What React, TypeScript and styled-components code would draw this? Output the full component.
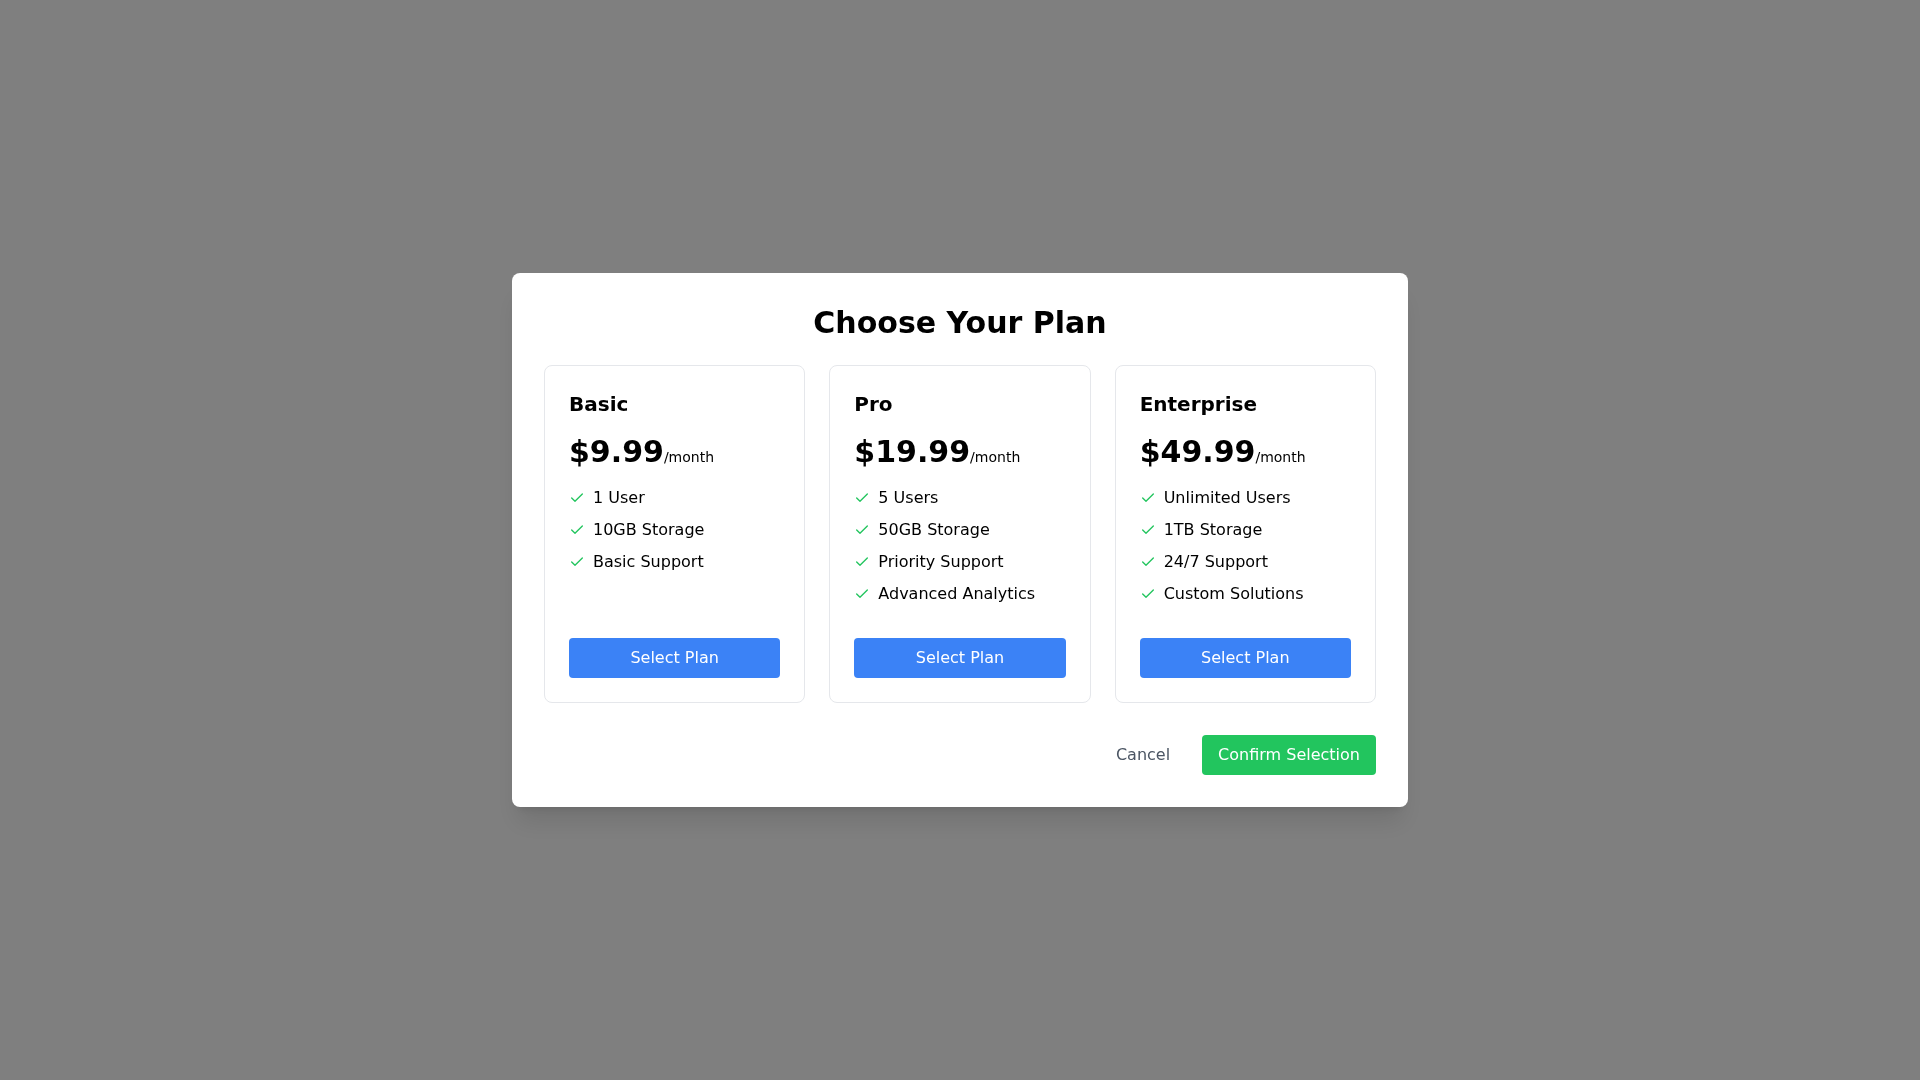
import React from "react";
import styled, { createGlobalStyle } from "styled-components";

const Global = createGlobalStyle`
  * { box-sizing: border-box; }
  html, body { margin: 0; padding: 0; background: #ffffff; }
  body { font-family: "DejaVu Sans", sans-serif; }
`;

const Overlay = styled.div`
  position: fixed;
  inset: 0;
  background: rgba(0, 0, 0, 0.5);
  display: flex;
  align-items: center;
  justify-content: center;
`;

const Modal = styled.div`
  width: 896px;
  background: #ffffff;
  border-radius: 8px;
  padding: 32px;
  box-shadow: 0 20px 25px -5px rgba(0, 0, 0, 0.1), 0 8px 10px -6px rgba(0, 0, 0, 0.1);
`;

const Title = styled.h2`
  margin: 0 0 24px;
  font-size: 30px;
  line-height: 36px;
  font-weight: 700;
  text-align: center;
  color: #000;
`;

const Grid = styled.div`
  display: grid;
  grid-template-columns: repeat(3, 1fr);
  gap: 24px;
`;

const Card = styled.div`
  border: 1px solid #e5e7eb;
  border-radius: 8px;
  padding: 24px;
  display: flex;
  flex-direction: column;
`;

const PlanName = styled.h3`
  margin: 0 0 16px;
  font-size: 20px;
  line-height: 28px;
  font-weight: 700;
  color: #000;
`;

const Price = styled.p`
  margin: 0 0 16px;
  font-size: 30px;
  line-height: 36px;
  font-weight: 700;
  color: #000;
`;

const Period = styled.span`
  font-size: 14px;
  line-height: 20px;
  font-weight: 400;
`;

const Features = styled.ul`
  list-style: none;
  margin: 0 0 32px;
  padding: 0;
  display: flex;
  flex-direction: column;
  gap: 8px;
  flex-grow: 1;
`;

const Feature = styled.li`
  display: flex;
  align-items: center;
  font-size: 16px;
  line-height: 24px;
  color: #000;
`;

const CheckIcon = styled.svg`
  width: 16px;
  height: 16px;
  margin-right: 8px;
  flex-shrink: 0;
  color: #22c55e;
`;

const Button = styled.button<{ $variant: "blue" | "green" | "ghost"; $full?: boolean }>`
  border: none;
  border-radius: 4px;
  padding: 8px 16px;
  font-family: "DejaVu Sans", sans-serif;
  font-size: 16px;
  line-height: 24px;
  cursor: pointer;
  width: ${(p) => (p.$full ? "100%" : "auto")};
  background: ${(p) =>
    p.$variant === "blue" ? "#3b82f6" : p.$variant === "green" ? "#22c55e" : "transparent"};
  color: ${(p) => (p.$variant === "ghost" ? "#4b5563" : "#ffffff")};
`;

const Footer = styled.div`
  margin-top: 32px;
  display: flex;
  justify-content: flex-end;
  gap: 16px;
`;

const plans = [
  { name: "Basic", price: "$9.99", features: ["1 User", "10GB Storage", "Basic Support"] },
  {
    name: "Pro",
    price: "$19.99",
    features: ["5 Users", "50GB Storage", "Priority Support", "Advanced Analytics"],
  },
  {
    name: "Enterprise",
    price: "$49.99",
    features: ["Unlimited Users", "1TB Storage", "24/7 Support", "Custom Solutions"],
  },
];

const Check = () => (
  <CheckIcon viewBox="0 0 24 24" fill="none" stroke="currentColor" strokeWidth={2} strokeLinecap="round" strokeLinejoin="round">
    <path d="M20 6 9 17l-5-5" />
  </CheckIcon>
);

export default function App() {
  return (
    <>
      <Global />
      <Overlay>
        <Modal>
          <Title>Choose Your Plan</Title>
          <Grid>
            {plans.map((p) => (
              <Card key={p.name}>
                <PlanName>{p.name}</PlanName>
                <Price>
                  {p.price}
                  <Period>/month</Period>
                </Price>
                <Features>
                  {p.features.map((f) => (
                    <Feature key={f}>
                      <Check />
                      {f}
                    </Feature>
                  ))}
                </Features>
                <Button $variant="blue" $full>
                  Select Plan
                </Button>
              </Card>
            ))}
          </Grid>
          <Footer>
            <Button $variant="ghost">Cancel</Button>
            <Button $variant="green">Confirm Selection</Button>
          </Footer>
        </Modal>
      </Overlay>
    </>
  );
}
